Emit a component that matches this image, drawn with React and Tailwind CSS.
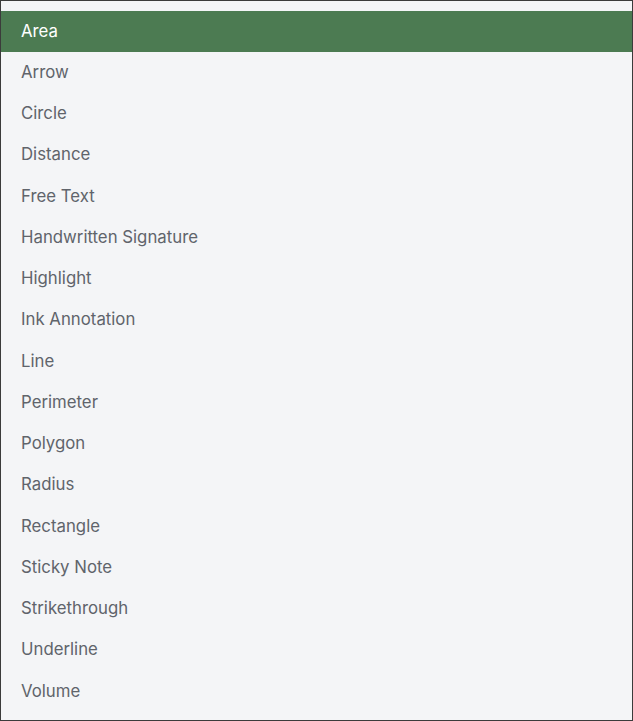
import React from 'react';

const items = [
  'Area',
  'Arrow',
  'Circle',
  'Distance',
  'Free Text',
  'Handwritten Signature',
  'Highlight',
  'Ink Annotation',
  'Line',
  'Perimeter',
  'Polygon',
  'Radius',
  'Rectangle',
  'Sticky Note',
  'Strikethrough',
  'Underline',
  'Volume',
];

export default function App() {
  const selected = 'Area';
  return (
    <div
      className="w-[633px] h-[721px] border border-[#3b3b3b] bg-[#f4f5f7] overflow-hidden pt-[10px]"
      style={{ fontFamily: 'Inter, "Open Sans", sans-serif' }}
    >
      <ul>
        {items.map((item) => (
          <li
            key={item}
            className={
              item === selected
                ? 'h-[41.25px] flex items-center pl-5 pb-[1px] text-[16.8px] bg-[#4c7b52] text-white'
                : 'h-[41.25px] flex items-center pl-5 pb-[1px] text-[16.8px] text-[#60646b]'
            }
          >
            {item}
          </li>
        ))}
      </ul>
    </div>
  );
}
